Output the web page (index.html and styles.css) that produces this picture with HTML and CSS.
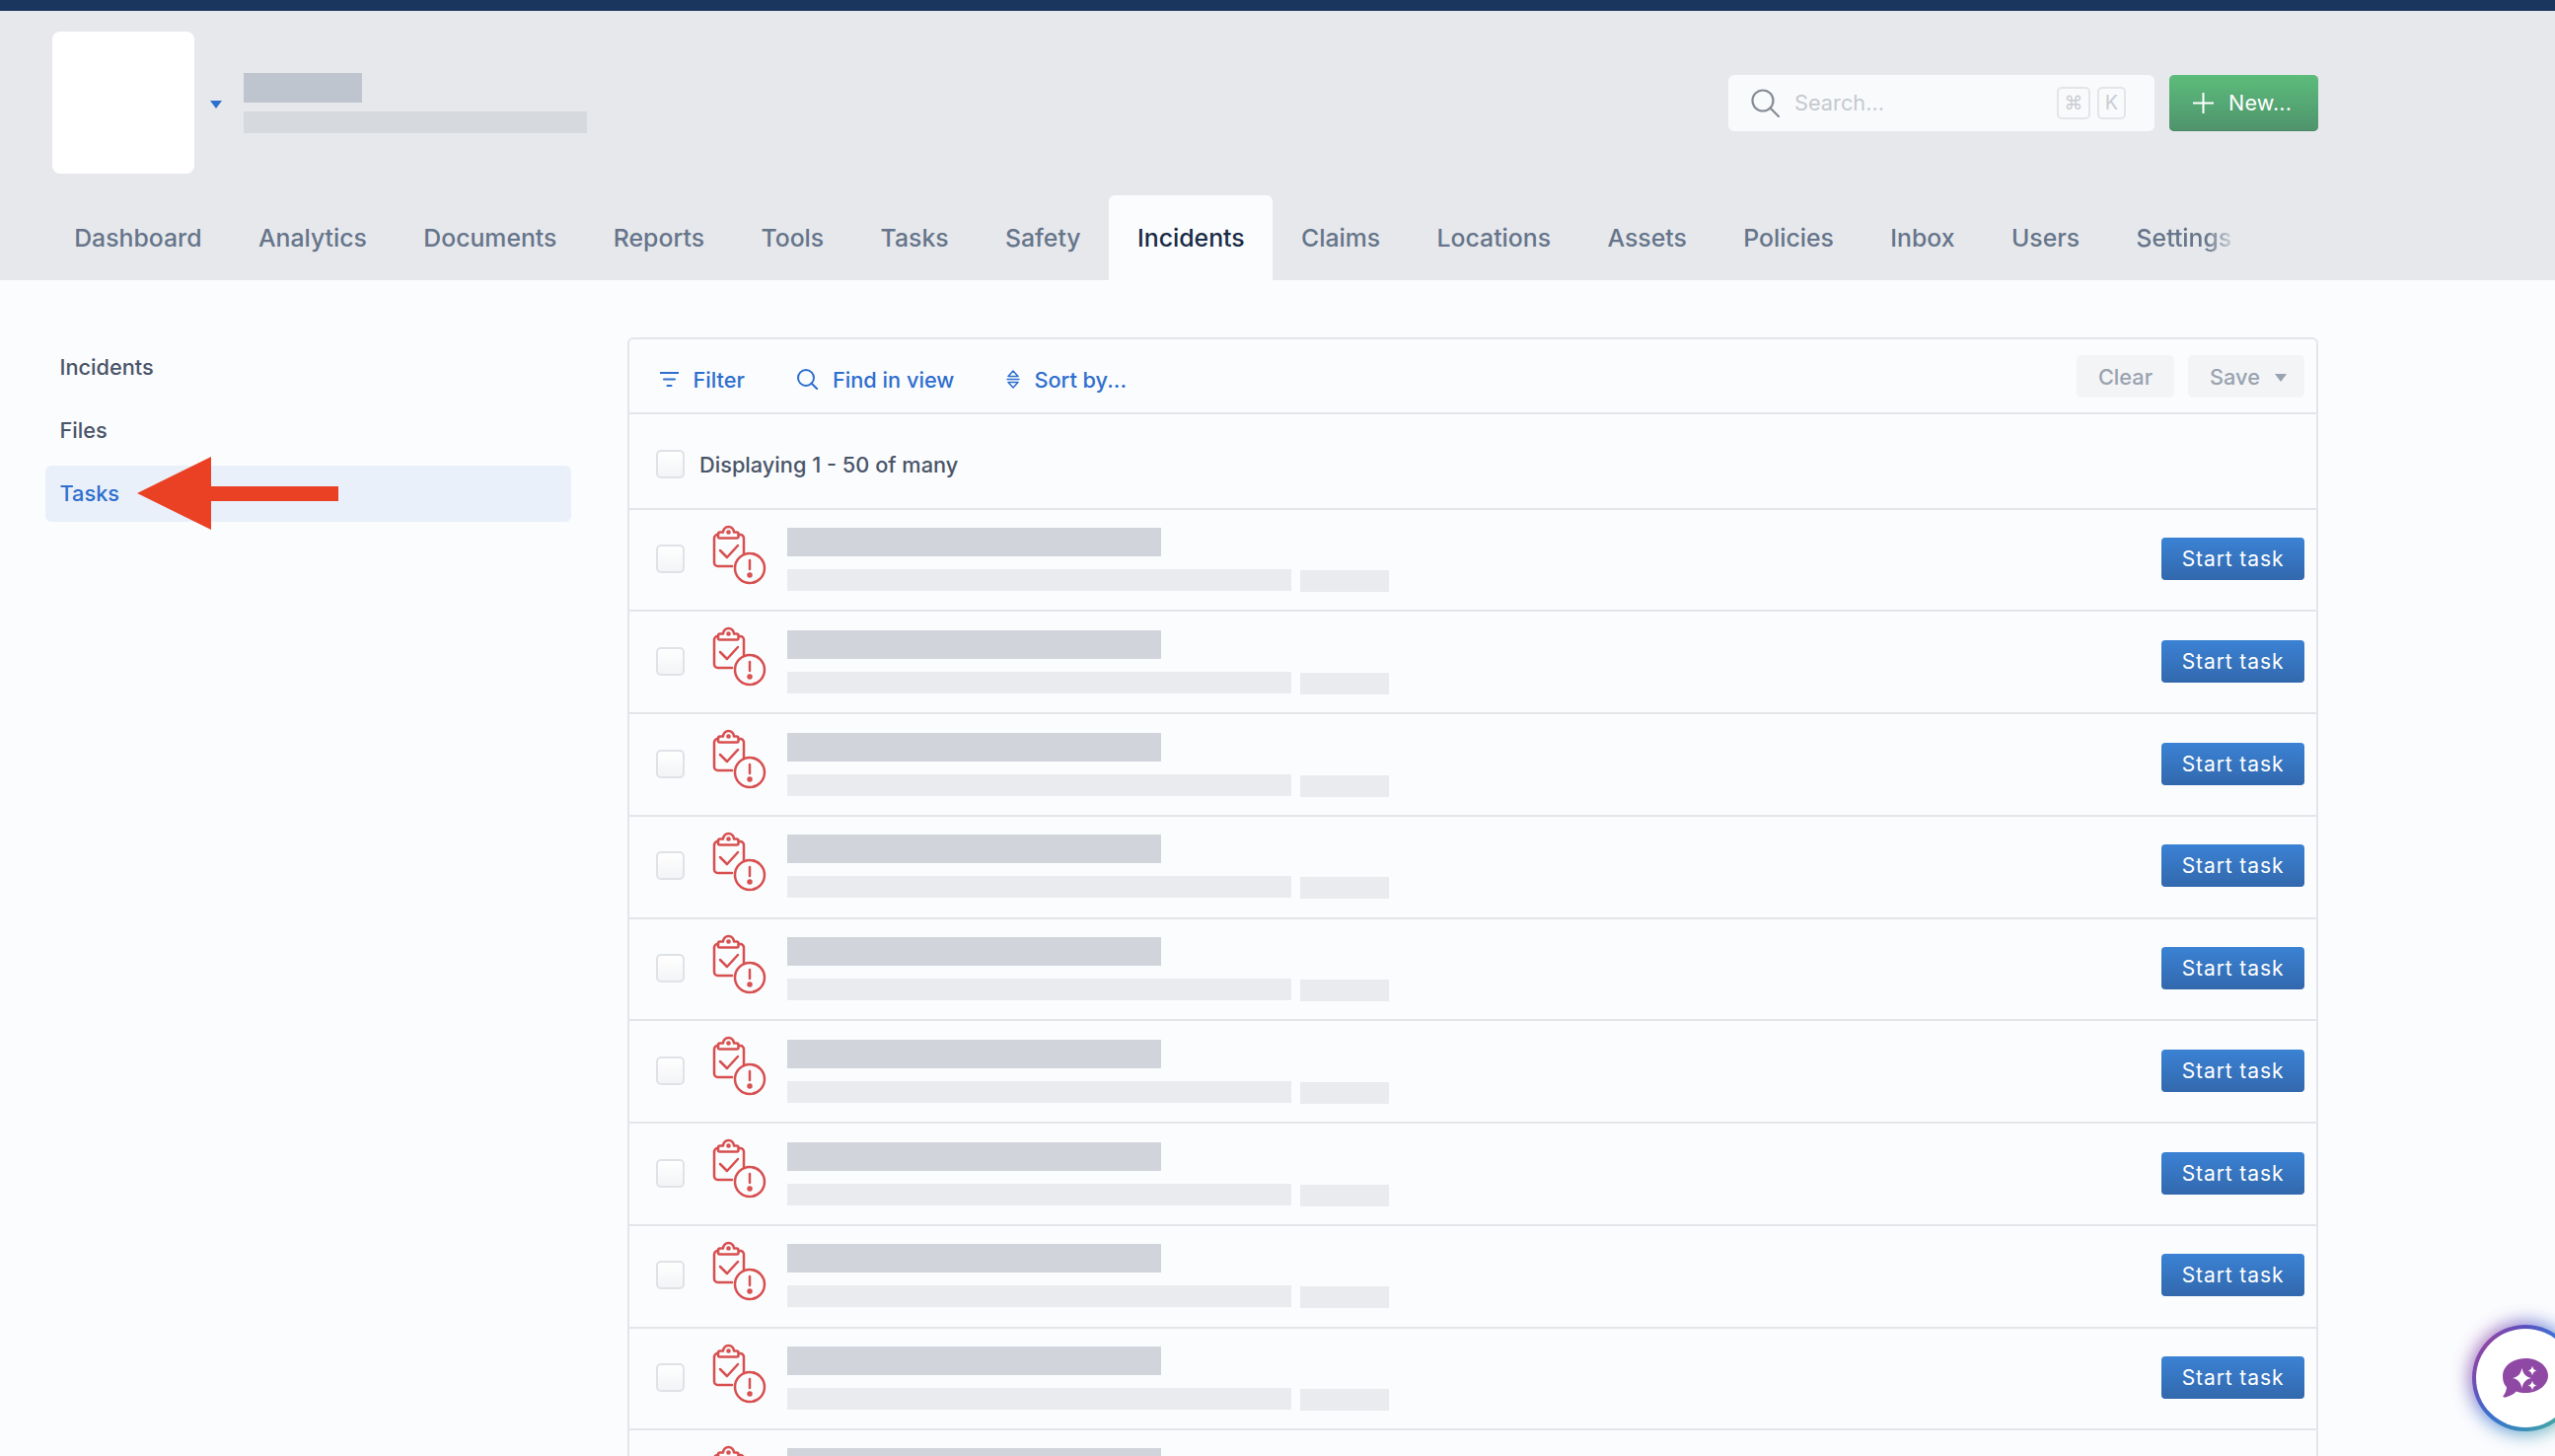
FILE: index.html
```html
<!DOCTYPE html>
<html lang="en">
<head>
    <meta charset="UTF-8">
    <title>Incidents - Tasks</title>
    <link rel="stylesheet" href="styles.css">
</head>
<body>
    <svg class="defs" width="0" height="0">
        <symbol id="task-icon" viewBox="40 10 60 65">
            <path d="M48 22h-.5a3.500 3.500 0 0 0-3.500 3.500v25a3.500 3.500 0 0 0 3.500 3.500H62M69 22h1.500a3.500 3.500 0 0 1 3.500 3.500V42"/>
            <path d="M50 25.500h17a1.500 1.500 0 0 0 1.500-1.500v-2.500a2 2 0 0 0-2-2H64a5.500 5.500 0 0 0-11 0h-3a2 2 0 0 0-2 2V24a1.500 1.500 0 0 0 1.500 1.500z"/>
            <path d="M50 38l7 7 11-12"/>
            <circle cx="80" cy="56" r="15"/>
            <path d="M80 48v9"/>
            <circle class="dot" cx="80" cy="63" r="1.500"/>
            <circle class="dot" cx="58.500" cy="19.500" r="1.100"/>
        </symbol>
    </svg>

    <header class="header">
        <div class="top-row">
            <div class="brand">
                <div class="logo"></div>
                <span class="brand-caret"></span>
                <div class="brand-text">
                    <div class="ph ph-name"></div>
                    <div class="ph ph-org"></div>
                </div>
            </div>
            <div class="actions">
                <div class="search">
                    <svg class="search-icon" viewBox="0 0 29 29" width="29" height="29"><circle cx="12" cy="12" r="10.500"/><path d="M19.500 19.500L28 28"/></svg>
                    <span class="search-text">Search...</span>
                    <span class="key key-cmd">⌘</span>
                    <span class="key">K</span>
                </div>
                <button class="btn-new">
                    <svg viewBox="0 0 21 21" width="21" height="21"><path d="M10.500 0v21M0 10.500h21"/></svg>
                    New...
                </button>
            </div>
        </div>
        <nav class="tabs">
            <a class="tab">Dashboard</a>
            <a class="tab">Analytics</a>
            <a class="tab">Documents</a>
            <a class="tab">Reports</a>
            <a class="tab">Tools</a>
            <a class="tab">Tasks</a>
            <a class="tab">Safety</a>
            <a class="tab active">Incidents</a>
            <a class="tab">Claims</a>
            <a class="tab">Locations</a>
            <a class="tab">Assets</a>
            <a class="tab">Policies</a>
            <a class="tab">Inbox</a>
            <a class="tab">Users</a>
            <a class="tab fade">Settings</a>
        </nav>
    </header>

    <div class="layout">
        <aside class="sidebar">
            <a class="side-item">Incidents</a>
            <a class="side-item">Files</a>
            <a class="side-item active">Tasks
                <svg class="arrow" viewBox="0 0 204 74" width="204" height="74"><polygon points="0,37 75,0 75,30 204,30 204,45 75,45 75,74"/></svg>
            </a>
        </aside>

        <main class="panel">
            <div class="toolbar">
                <div class="tools">
                    <a class="tool">
                        <svg width="19" height="15" viewBox="0 0 19 15"><path d="M0 1h19M4 7.500h11M7.500 14h4"/></svg>
                        Filter
                    </a>
                    <a class="tool">
                        <svg width="21" height="21" viewBox="0 0 21 21"><circle cx="9" cy="9" r="8"/><path d="M14.500 14.500L20.500 20.500"/></svg>
                        Find in view
                    </a>
                    <a class="tool tool-sort">
                        <svg class="sort-icon" width="14" height="19" viewBox="0 0 14 19"><path d="M7 1l5 5.500H2zM1 9.500h12M2 12.500h10L7 18z"/></svg>
                        Sort by...
                    </a>
                </div>
                <div class="tool-buttons">
                    <button class="btn-soft">Clear</button>
                    <button class="btn-soft btn-save">Save <span class="save-caret"></span></button>
                </div>
            </div>

            <div class="row row-head">
                <span class="check"></span>
                <span class="count">Displaying 1 - 50 of many</span>
            </div>

            <div class="row">
                <span class="check"></span>
                <svg class="task-icon"><use href="#task-icon"/></svg>
                <div class="row-text">
                    <div class="ph ph-title"></div>
                    <div class="ph-line"><div class="ph ph-sub"></div><div class="ph ph-tag"></div></div>
                </div>
                <button class="btn-start">Start task</button>
            </div>
            <div class="row">
                <span class="check"></span>
                <svg class="task-icon"><use href="#task-icon"/></svg>
                <div class="row-text">
                    <div class="ph ph-title"></div>
                    <div class="ph-line"><div class="ph ph-sub"></div><div class="ph ph-tag"></div></div>
                </div>
                <button class="btn-start">Start task</button>
            </div>
            <div class="row">
                <span class="check"></span>
                <svg class="task-icon"><use href="#task-icon"/></svg>
                <div class="row-text">
                    <div class="ph ph-title"></div>
                    <div class="ph-line"><div class="ph ph-sub"></div><div class="ph ph-tag"></div></div>
                </div>
                <button class="btn-start">Start task</button>
            </div>
            <div class="row">
                <span class="check"></span>
                <svg class="task-icon"><use href="#task-icon"/></svg>
                <div class="row-text">
                    <div class="ph ph-title"></div>
                    <div class="ph-line"><div class="ph ph-sub"></div><div class="ph ph-tag"></div></div>
                </div>
                <button class="btn-start">Start task</button>
            </div>
            <div class="row">
                <span class="check"></span>
                <svg class="task-icon"><use href="#task-icon"/></svg>
                <div class="row-text">
                    <div class="ph ph-title"></div>
                    <div class="ph-line"><div class="ph ph-sub"></div><div class="ph ph-tag"></div></div>
                </div>
                <button class="btn-start">Start task</button>
            </div>
            <div class="row">
                <span class="check"></span>
                <svg class="task-icon"><use href="#task-icon"/></svg>
                <div class="row-text">
                    <div class="ph ph-title"></div>
                    <div class="ph-line"><div class="ph ph-sub"></div><div class="ph ph-tag"></div></div>
                </div>
                <button class="btn-start">Start task</button>
            </div>
            <div class="row">
                <span class="check"></span>
                <svg class="task-icon"><use href="#task-icon"/></svg>
                <div class="row-text">
                    <div class="ph ph-title"></div>
                    <div class="ph-line"><div class="ph ph-sub"></div><div class="ph ph-tag"></div></div>
                </div>
                <button class="btn-start">Start task</button>
            </div>
            <div class="row">
                <span class="check"></span>
                <svg class="task-icon"><use href="#task-icon"/></svg>
                <div class="row-text">
                    <div class="ph ph-title"></div>
                    <div class="ph-line"><div class="ph ph-sub"></div><div class="ph ph-tag"></div></div>
                </div>
                <button class="btn-start">Start task</button>
            </div>
            <div class="row">
                <span class="check"></span>
                <svg class="task-icon"><use href="#task-icon"/></svg>
                <div class="row-text">
                    <div class="ph ph-title"></div>
                    <div class="ph-line"><div class="ph ph-sub"></div><div class="ph ph-tag"></div></div>
                </div>
                <button class="btn-start">Start task</button>
            </div>
            <div class="row row-cut">
                <span class="check"></span>
                <svg class="task-icon"><use href="#task-icon"/></svg>
                <div class="row-text">
                    <div class="ph ph-title"></div>
                </div>
            </div>
        </main>
    </div>

    <div class="chat">
        <div class="chat-inner">
            <svg viewBox="94 55 50 44" width="50" height="44">
                <path class="bubble" d="M119 57c12.700 0 23 7.800 23 17.500S131.700 92 119 92c-3.300 0-6.400-.5-9.200-1.500-3.400 3.500-8 5.800-12.300 6-1.300 0-1.600-1-.8-1.800 1.800-2.200 3-4.900 3.300-8.500-3.200-3-4-7-4-11.700C96 64.800 106.300 57 119 57z"/>
                <path class="spark" d="M115.500 66.500c1 6 4 9.500 9.500 10.500-5.500 1-8.500 4.500-9.500 10.500-1-6-4-9.500-9.500-10.500 5.500-1 8.500-4.500 9.500-10.500z"/>
                <path class="spark" d="M126 64.500c.5 3 2 4.500 4.500 5-2.500.5-4 2-4.500 5-.5-3-2-4.500-4.500-5 2.500-.5 4-2 4.500-5z"/>
                <path class="spark" d="M126 79.500c.5 3 2 4.500 4.500 5-2.500.5-4 2-4.500 5-.5-3-2-4.500-4.500-5 2.500-.5 4-2 4.500-5z"/>
            </svg>
        </div>
    </div>
</body>
</html>
```

FILE: styles.css
```css
* {
    box-sizing: border-box;
}
html, body {
    height: 1476px;
    overflow: hidden;
}
body {
    margin: 0;
    background: #fbfcfe;
    font-family: Inter, "Liberation Sans", sans-serif;
    position: relative;
}
.defs {
    position: absolute;
}
button {
    font-family: inherit;
    border: none;
    cursor: pointer;
}

.header {
    height: 284px;
    background: #e6e8ec;
    border-top: 11px solid #1a365f;
}
.top-row {
    height: 187px;
    padding: 21px 240px 22px 53px;
    display: flex;
    justify-content: space-between;
    align-items: center;
}
.brand {
    display: flex;
    align-items: center;
}
.logo {
    width: 144px;
    height: 144px;
    background: #fff;
    border-radius: 8px;
}
.brand-caret {
    margin: 4px 21.500px 0 16px;
    width: 0;
    height: 0;
    border-left: 6.5px solid transparent;
    border-right: 6.5px solid transparent;
    border-top: 8px solid #2f6fce;
}
.brand-text {
    display: flex;
    flex-direction: column;
    gap: 9px;
}
.ph-name {
    width: 120px;
    height: 30px;
    background: #bfc5ce;
}
.ph-org {
    width: 348px;
    height: 22px;
    background: #d6d9de;
}

.actions {
    display: flex;
    gap: 15px;
}
.search {
    width: 432px;
    height: 57px;
    background: #f9fafc;
    border-radius: 6px;
    padding: 0 29px 0 23px;
    display: flex;
    align-items: center;
}
.search-icon {
    fill: none;
    stroke: #868c96;
    stroke-width: 2.2;
    stroke-linecap: round;
}
.search-text {
    margin-left: 15px;
    flex: 1;
    font-size: 21.75px;
    color: #c5c9cf;
}
.key {
    width: 29px;
    height: 33px;
    border: 2px solid #e3e5e9;
    border-radius: 5px;
    font-size: 20px;
    color: #c9cdd3;
    display: flex;
    align-items: center;
    justify-content: center;
}
.key-cmd {
    width: 34px;
    margin-right: 7px;
    font-family: "DejaVu Sans", sans-serif;
    font-size: 19px;
}
.btn-new {
    width: 151px;
    height: 57px;
    padding: 0 0 0 24px;
    border-radius: 5px;
    background: linear-gradient(#5cbc7a, #4f936d);
    box-shadow: inset 0 -1px 0 #4b8767;
    color: #fff;
    font-size: 21.5px;
    font-weight: 400;
    letter-spacing: 0.2px;
    display: flex;
    align-items: center;
    gap: 15px;
}
.btn-new svg {
    stroke: #fff;
    stroke-width: 2;
    fill: none;
}

.tabs {
    height: 86px;
    padding-left: 46.500px;
    display: flex;
}
.tab {
    padding: 0 28.7px;
    font-size: 24.8px;
    font-weight: 500;
    color: #66758a;
    display: flex;
    align-items: center;
}
.tab.active {
    background: #fbfcfe;
    color: #1a2b45;
    border-radius: 6px 6px 0 0;
}
.tab.fade {
    -webkit-mask-image: linear-gradient(90deg, #000 64%, rgba(0,0,0,0.2) 82%);
    mask-image: linear-gradient(90deg, #000 64%, rgba(0,0,0,0.2) 82%);
}

.layout {
    padding: 58px 240px 0 46px;
    display: flex;
    gap: 57px;
    align-items: flex-start;
}
.sidebar {
    width: 533px;
    padding-top: 2px;
    display: flex;
    flex-direction: column;
    gap: 7px;
}
.side-item {
    height: 57px;
    padding: 0 0 2px 14.500px;
    border-radius: 6px;
    font-size: 21.75px;
    font-weight: 500;
    color: #4a5568;
    display: flex;
    align-items: center;
    position: relative;
}
.side-item.active {
    background: #e9f0f9;
    color: #2f6fce;
}
.arrow {
    position: absolute;
    left: 93px;
    top: -9px;
    fill: #ea4125;
}

.panel {
    flex: 1;
    height: 1134px;
    overflow: hidden;
    border: 2px solid #e3e5e9;
    border-bottom: none;
    border-radius: 6px 6px 0 0;
}
.toolbar {
    height: 74px;
    padding: 1px 12px 0 31px;
    display: flex;
    justify-content: space-between;
    align-items: center;
}
.tools {
    display: flex;
    gap: 53.500px;
    padding-top: 6px;
}
.tool {
    display: flex;
    align-items: center;
    gap: 14.500px;
    font-size: 21.75px;
    font-weight: 500;
    color: #2f6fce;
}
.tool-sort {
    margin-left: -1px;
}
.tool svg {
    fill: none;
    stroke: #2f6fce;
    stroke-width: 2;
    stroke-linecap: round;
    stroke-linejoin: round;
}
.tool .sort-icon {
    stroke-width: 1.500;
}
.tool-buttons {
    display: flex;
    gap: 14px;
}
.btn-soft {
    height: 43px;
    padding: 0 22px;
    border-radius: 5px;
    background: #f3f4f6;
    color: #99a3b0;
    font-size: 21.75px;
    font-weight: 500;
    display: flex;
    align-items: center;
}
.btn-save {
    padding-right: 18px;
}
.save-caret {
    margin-left: 15px;
    margin-top: 3px;
    width: 0;
    height: 0;
    border-left: 6.5px solid transparent;
    border-right: 6.5px solid transparent;
    border-top: 8px solid #99a3b0;
}

.row {
    height: 103.75px;
    padding: 0 12px 2px 27px;
    border-top: 2px solid #e3e5e9;
    display: flex;
    align-items: center;
}
.row-head {
    height: 96.7px;
    padding: 7px 12px 0 27px;
    gap: 15px;
}
.check {
    width: 29px;
    height: 29px;
    border: 2px solid #dfe2e6;
    border-radius: 5px;
    background: linear-gradient(#fff, #f3f4f6);
    flex: none;
}
.count {
    font-size: 21.75px;
    font-weight: 500;
    color: #4a5568;
}
.task-icon {
    width: 60px;
    height: 65px;
    margin: 13px 18px 0 26px;
    align-self: flex-start;
    fill: none;
    stroke: #d84f4f;
    stroke-width: 2.5;
    stroke-linecap: round;
    stroke-linejoin: round;
}
.task-icon .dot {
    fill: #d84f4f;
    stroke: none;
}
.row-text {
    flex: 1;
    margin-top: 2px;
    display: flex;
    flex-direction: column;
    gap: 13px;
}
.row-cut .row-text {
    align-self: flex-start;
    margin-top: 18px;
}
.ph-title {
    width: 379px;
    height: 29px;
    background: #d1d5db;
}
.ph-line {
    display: flex;
    gap: 9px;
}
.ph-sub {
    width: 511px;
    height: 22px;
    background: #e9ebee;
}
.ph-tag {
    width: 90px;
    height: 22px;
    margin-top: 1px;
    background: #e9ebee;
}
.btn-start {
    width: 145px;
    height: 43px;
    border-radius: 4px;
    background: linear-gradient(#3b82d4, #3268ad);
    color: #fff;
    font-size: 21px;
    font-weight: 400;
    letter-spacing: 0.9px;
}

.chat {
    position: absolute;
    left: 2506px;
    top: 1343px;
    width: 108px;
    height: 108px;
    border-radius: 50%;
    background: conic-gradient(#5a4fc0, #3a80d8 45deg, #4caaa0 135deg, #3a90b8 180deg, #3a6fd0 225deg, #7a4ab0 270deg, #9048a5 315deg, #5a4fc0);
    padding: 4px;
}
.chat::before {
    content: "";
    position: absolute;
    inset: -3px;
    border-radius: 50%;
    background: inherit;
    filter: blur(9px);
    opacity: 0.75;
}
.chat-inner {
    position: relative;
    width: 100%;
    height: 100%;
    border-radius: 50%;
    background: #fff;
    display: flex;
    align-items: center;
    justify-content: center;
}
.bubble {
    fill: #9048a5;
}
.spark {
    fill: #fff;
}
```
